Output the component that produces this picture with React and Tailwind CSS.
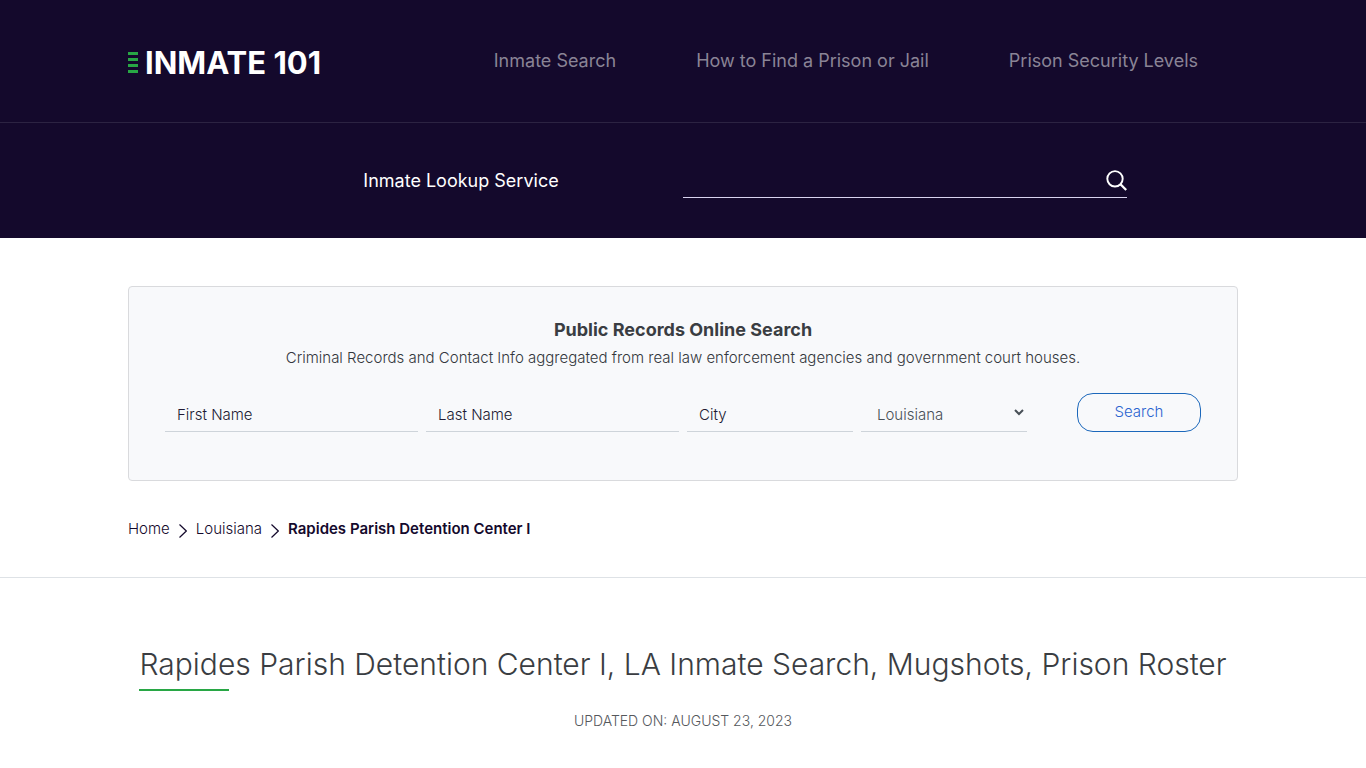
import React, { useState } from 'react';

const navLinks = [
  { label: 'Inmate Search', href: '#inmate-search' },
  { label: 'How to Find a Prison or Jail', href: '#find-prison' },
  { label: 'Prison Security Levels', href: '#security-levels' },
];

const states = ['Alabama', 'Arkansas', 'Florida', 'Georgia', 'Louisiana', 'Mississippi', 'Texas'];

const fieldClass =
  'w-full h-[39px] px-3 pt-1 text-[15px] font-light bg-transparent border-b border-[#ced4da] outline-none placeholder:text-[#211a33]';

function Logo() {
  return (
    <a href="#home" className="flex items-center gap-[7px] pt-[3px] text-white">
      <svg width="10" height="22" viewBox="0 0 10 22" fill="#28a745" aria-hidden="true">
        <rect y="0" width="10" height="3" />
        <rect y="6" width="10" height="3" />
        <rect y="12" width="10" height="3" />
        <rect y="18" width="10" height="3" />
      </svg>
      <span className="text-[31px] leading-9 font-bold whitespace-nowrap">INMATE 101</span>
    </a>
  );
}

function Chevron() {
  return (
    <svg width="8" height="14" viewBox="0 0 8 14" fill="none" stroke="#14092c" strokeWidth="1.2" className="mt-[3px]" aria-hidden="true">
      <path d="M0.5 0.5L7.3 7L0.5 13.5" />
    </svg>
  );
}

function Header() {
  return (
    <header className="bg-[#14092c]">
      <div className="border-b border-[#2c2342]">
        <div className="max-w-[1110px] mx-auto h-[122px] flex items-center justify-between">
          <Logo />
          <nav className="flex">
            {navLinks.map(l => (
              <a key={l.href} href={l.href} className="px-10 text-[18px] leading-6 text-[#8a8496]">{l.label}</a>
            ))}
          </nav>
        </div>
      </div>
      <form className="max-w-[888px] mx-auto h-[115px] grid grid-cols-2 items-center" onSubmit={e => e.preventDefault()}>
        <label htmlFor="lookup" className="text-center text-[18px] leading-6 text-white">Inmate Lookup Service</label>
        <div className="flex items-center h-[34px] border-b border-[#d8d2ee]">
          <input id="lookup" type="text" className="flex-1 min-w-0 h-full bg-transparent text-white outline-none" />
          <button type="submit" aria-label="Search">
            <svg width="21" height="21" viewBox="0 0 21 21" fill="none" stroke="#fff" strokeWidth="1.9">
              <circle cx="9" cy="8.8" r="7.7" />
              <path d="M14.6 14.4L20.2 20" strokeWidth="2.2" />
            </svg>
          </button>
        </div>
      </form>
    </header>
  );
}

function RecordsSearch() {
  const [state, setState] = useState('Louisiana');

  return (
    <section className="mt-12 px-9 pt-[31px] pb-12 bg-[#f8f9fb] border border-[#d9dadd] rounded">
      <h2 className="text-center text-[18px] leading-6 font-bold text-[#3a3d42]">Public Records Online Search</h2>
      <p className="mt-1 text-center text-[15px] leading-6 font-light text-[#33373c]">
        Criminal Records and Contact Info aggregated from real law enforcement agencies and government court houses.
      </p>
      <form className="mt-[23px] grid grid-cols-12 gap-2" onSubmit={e => e.preventDefault()}>
        <div className="col-span-3">
          <input type="text" aria-label="First Name" placeholder="First Name" className={fieldClass} />
        </div>
        <div className="col-span-3">
          <input type="text" aria-label="Last Name" placeholder="Last Name" className={fieldClass} />
        </div>
        <div className="col-span-2">
          <input type="text" aria-label="City" placeholder="City" className={fieldClass} />
        </div>
        <div className="col-span-2">
          <select aria-label="State" value={state} onChange={e => setState(e.target.value)} className={fieldClass + ' pr-0 text-[#495057]'}>
            {states.map(s => <option key={s} value={s}>{s}</option>)}
          </select>
        </div>
        <div className="col-span-2 flex justify-end">
          <button type="submit" className="w-[124px] h-[39px] border border-[#1c68bb] rounded-2xl text-[15px] font-light text-[#2a63cf]">Search</button>
        </div>
      </form>
    </section>
  );
}

export default function App() {
  return (
    <div className="font-['Inter',sans-serif] bg-white text-[#14092c]">
      <Header />
      <div className="border-b border-[#dee2e6]">
        <div className="max-w-[1110px] mx-auto">
          <RecordsSearch />
          <nav aria-label="Breadcrumb" className="flex items-center gap-[9px] h-24 text-[15px]">
            <a href="#home" className="font-light">Home</a>
            <Chevron />
            <a href="#louisiana" className="font-light">Louisiana</a>
            <Chevron />
            <span className="font-semibold">Rapides Parish Detention Center I</span>
          </nav>
        </div>
      </div>
      <main className="max-w-[1110px] mx-auto pt-[68px] pb-9 text-center">
        <h1 className="inline-block text-left text-[30px] leading-9 font-light text-[#3a3d42]">
          Rapides Parish Detention Center I, LA Inmate Search, Mugshots, Prison Roster
          <span className="block mt-[7px] w-[90px] h-[2px] bg-[#28a745]" />
        </h1>
        <p className="mt-[18px] text-[14px] leading-6 font-light text-[#55585c]">UPDATED ON: AUGUST 23, 2023</p>
      </main>
    </div>
  );
}
